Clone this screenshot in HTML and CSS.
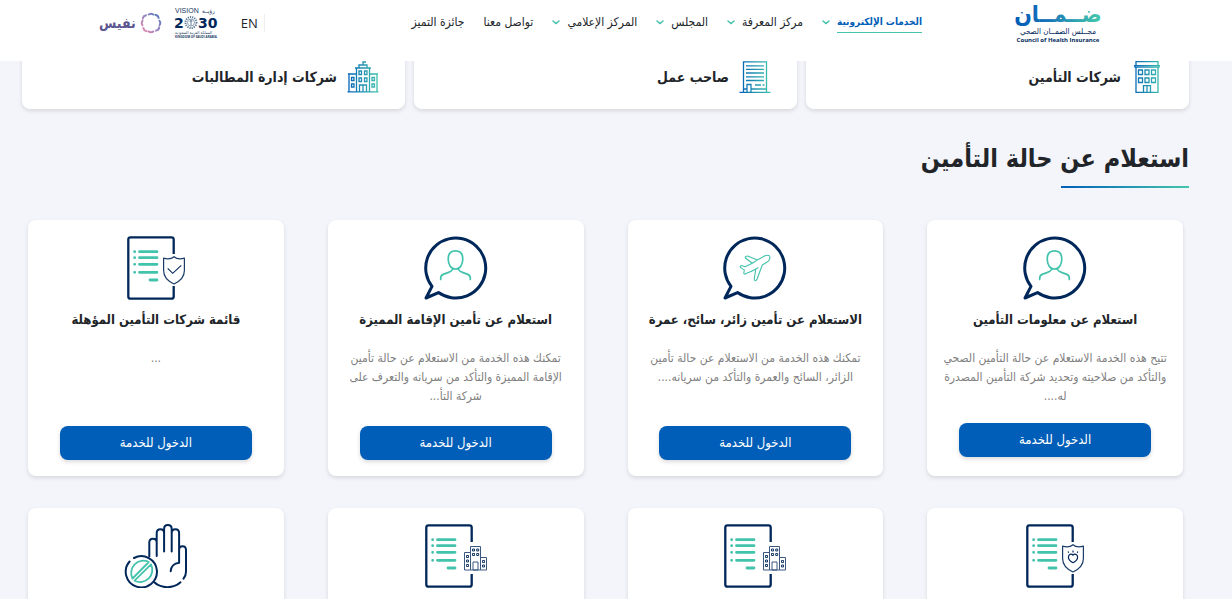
FILE: index.html
```html
<!DOCTYPE html>
<html lang="ar" dir="rtl">
<head>
<meta charset="utf-8">
<meta name="viewport" content="width=device-width, initial-scale=1">
<title>مجلس الضمان الصحي</title>
<link rel="stylesheet" href="styles.css">
</head>
<body>
<svg class="defs" width="0" height="0" aria-hidden="true">
  <defs>
    <linearGradient id="brand" gradientUnits="userSpaceOnUse" x1="0" y1="0" x2="32" y2="0">
      <stop offset="0" stop-color="#005eb8"/><stop offset="1" stop-color="#43c6ac"/>
    </linearGradient>
    <symbol id="chevron" viewBox="0 0 8 5"><path d="M1 1l3 2.6L7 1" fill="none" stroke="#43c2ac" stroke-width="1.5" stroke-linecap="round"/></symbol>
    <symbol id="bubble" viewBox="0 0 64 64">
      <path d="M8 50.4A30 30 0 1 1 14.5 56.6L2 62z" fill="none" stroke="#00275a" stroke-width="3" stroke-linejoin="round"/>
    </symbol>
    <symbol id="person" viewBox="0 0 64 64">
      <g fill="none" stroke="#43c2ac" stroke-width="1.7" stroke-linecap="round">
        <path d="M31.500 14.800c4.600 0 7.300 2.800 7.300 8.200 0 5.800-3 10-7.300 10s-7.300-4.200-7.300-10c0-5.400 2.700-8.200 7.300-8.200z"/>
        <path d="M16.700 43.500v-1.500c0-2 1.100-3.200 3-3.900l4.300-1.500c2-.7 4-1.900 5.200-3.700M46.300 43.500v-1.500c0-2-1.100-3.200-3-3.900l-4.300-1.500c-2-.7-4-1.900-5.200-3.700"/>
      </g>
    </symbol>
    <symbol id="plane" viewBox="0 0 64 64">
      <path d="M46.500 20c-1-1.200-3-.8-4.500-.2L34.300 24l-9-3.700c-1-.4-1.700-.3-2.400.2-.9.600-.9 1.100-.2 1.800l6.600 5-7.300 3.400-3-1c-1.200-.2-2 .8-1.700 1.700l4 2.500-.5 3.400c.4 1 1.200.9 2 .5l2.500-1.300c3-.9 5-2 7.500-3.500l-1.500 9.500c-.1 1.600.5 2.500 1.500 2.100.7-.3 1-.9 1.300-1.600l5.200-14 5.300-3.200c1.700-1.200 3-3.900 1.900-5.800zM34.300 24l-5 3.300M32.800 33l2.500-1.500" fill="none" stroke="#43c2ac" stroke-width="1.100" stroke-linejoin="round"/>
    </symbol>
    <symbol id="doc" viewBox="0 0 62 64">
      <path d="M46.700 18V3.500c0-1.400-.8-2.200-2.200-2.200H3.500c-1.400 0-2.200.8-2.200 2.200v57c0 1.400.8 2.200 2.200 2.200h41c1.400 0 2.200-.8 2.200-2.200V50" fill="none" stroke="#00275a" stroke-width="2.300"/>
      <path d="M12.500 15.700h17.500M12.500 21.700h17.500M12.500 28.300h17.500M12.500 36.300h17.500M23 44h7M7.600 15.700h.1M7.600 21.700h.1M7.600 28.300h.1M7.600 36.300h.1" stroke="#43c2ac" stroke-width="2.800" stroke-linecap="round"/>
    </symbol>
    <symbol id="shield" viewBox="0 0 62 64">
      <path d="M47 20.700c-2.500 2.200-6 2.600-10.400 1.500v12.300c0 5.800 4.400 10.700 10.400 13.500 6-2.800 10.400-7.700 10.400-13.500V22.200c-4.400 1.100-7.900.7-10.400-1.500z" fill="#fff" stroke="#1b3c69" stroke-width="1.200" stroke-linejoin="round"/>
    </symbol>
    <symbol id="blocks" viewBox="0 0 62 64">
      <g fill="#fff" stroke="#3b5880" stroke-width="1"><path d="M39.500 28.500h6v17.500h-6zM55.500 33.500h6v12.500h-6zM45.500 22.500h10v23.500h-10zM48 38h5v8h-5z"/></g>
      <path d="M47.500 25h2v2h-2zM51.700 25h2v2h-2zM47.500 29.500h2v2h-2zM51.700 29.500h2v2h-2zM41.500 31.500h2v2h-2zM41.500 36h2v2h-2zM41.500 40.500h2v2h-2zM57.500 36.500h2v2h-2zM57.500 41h2v2h-2z" fill="#fff" stroke="#00275a" stroke-width=".9"/>
    </symbol>
  </defs>
</svg>

<header class="header">
  <a class="brand" href="#" aria-label="مجلس الضمان الصحي">
    <svg class="brand-mark" viewBox="0 0 80 42" width="80" height="42">
      <defs><linearGradient id="word" gradientUnits="userSpaceOnUse" x1="0" y1="0" x2="80" y2="0"><stop offset="0" stop-color="#005eb8"/><stop offset=".35" stop-color="#1672b9"/><stop offset="1" stop-color="#43c6ac"/></linearGradient></defs>
      <text class="word" x="40" y="20" fill="url(#word)">ضــمــان</text>
      <text class="word-ar" x="40" y="32">مجــلس الضمــان الصحي</text>
      <text class="word-en" x="40" y="40" direction="ltr">Council of Health Insurance</text>
    </svg>
  </a>
  <nav class="nav" aria-label="القائمة الرئيسية">
    <a class="nav-link nav-link-active" href="#"><span>الخدمات الإلكترونية</span><svg class="chev"><use href="#chevron"/></svg></a>
    <a class="nav-link" href="#"><span>مركز المعرفة</span><svg class="chev"><use href="#chevron"/></svg></a>
    <a class="nav-link" href="#"><span>المجلس</span><svg class="chev"><use href="#chevron"/></svg></a>
    <a class="nav-link" href="#"><span>المركز الإعلامي</span><svg class="chev"><use href="#chevron"/></svg></a>
    <a class="nav-link" href="#"><span>تواصل معنا</span></a>
    <a class="nav-link" href="#"><span>جائزة التميز</span></a>
  </nav>
  <div class="tools">
    <a class="lang" href="#" lang="en">EN</a>
    <svg class="vision" viewBox="0 0 44 32" width="44" height="32" role="img" aria-label="Vision 2030">
      <g fill="#17375f" direction="ltr">
        <text x="0" y="6" font-size="7" font-family="Liberation Sans, sans-serif">VISION</text>
        <text x="27" y="6" font-size="6">رؤيــة</text>
        <g fill="#00275a" font-size="14" font-weight="700" font-family="DejaVu Sans, sans-serif">
          <text x="-1" y="21">2</text>
          <text x="23" y="21">30</text>
        </g>
        <text x="0" y="27" font-size="4">المملكة العربية السعودية</text>
        <text x="0" y="31" font-size="3" font-weight="700" font-family="Open Sans, sans-serif">KINGDOM OF SAUDI ARABIA</text>
      </g>
      <g fill="none" stroke="#5e7c98"><circle cx="16" cy="15.500" r="5.500" stroke-width="2" stroke-dasharray="1.200 1"/><circle cx="16" cy="15.500" r="3.500" stroke-width=".7"/><path d="M16 12.500v6M14.500 14h3" stroke-width="1"/></g>
    </svg>
    <a class="nafis" href="#">
      <svg viewBox="0 0 22 22" width="22" height="22" aria-hidden="true">
        <defs><linearGradient id="ring" x1="1" y1="0" x2="0" y2="1"><stop offset="0" stop-color="#4a78b8"/><stop offset=".5" stop-color="#9a86c2"/><stop offset="1" stop-color="#e887a8"/></linearGradient></defs>
        <path d="M8.100 3q2.900-2.600 5.800 0M14.600 2.700q3.900.2 4.100 4.100M19 8.100q2.600 2.900 0 5.800M19.300 14.600q-.2 3.900-4.100 4.100M13.900 19q-2.900 2.600-5.800 0M7.400 19.300q-3.900-.2-4.100-4.100M3 13.900q-2.600-2.900 0-5.800M2.700 7.400q.2-3.900 4.100-4.100" fill="none" stroke="url(#ring)" stroke-width="1.900"/>
      </svg>
      <span>نفيس</span>
    </a>
  </div>
</header>

<main class="page">
  <div class="sectors">
    <a class="sector" href="#">
      <svg viewBox="0 0 32 32" width="32" height="32" fill="none" stroke="url(#brand)" stroke-width="1.300" aria-hidden="true">
        <path d="M5 .6h22v4H5zM3 4.600h26M4 4.600v1.500h24V4.600M5 6v25.400h22V6M7.500 9h4v4.500h-4zM14 9h4v4.500h-4zM20.500 9h4v4.500h-4zM7.500 17h4v4.500h-4zM14 17h4v4.500h-4zM20.500 17h4v4.500h-4zM12.500 31v-6.400h7V31M16 25v6"/>
      </svg>
      <span>شركات التأمين</span>
    </a>
    <a class="sector" href="#">
      <svg viewBox="0 0 32 32" width="32" height="32" fill="none" stroke="url(#brand)" stroke-width="1.300" aria-hidden="true">
        <path d="M4.500 31V.8h23V31M.5 31.300h31M7 4.800h18M7 8.300h18M7 12h18M7 15.800h18M7 19.500h18M8 31v-7.500h4V31M16 24h6M23.500 24h2M4.500 28h3.500M12 28h15.500"/>
      </svg>
      <span>صاحب عمل</span>
    </a>
    <a class="sector" href="#">
      <svg viewBox="0 0 32 32" width="32" height="32" fill="none" stroke="url(#brand)" stroke-width="1.300" aria-hidden="true">
        <path d="M9.500 30.500V7h13v23.500M8 7h16M12 7V4h8v3M16 4V1h3M2 30.500V13h7.500M1 13h8.500M22.500 13H31M30 13v17.500M.5 30.800h31M4.500 16.500h2.500v3H4.500zM4.500 23h2.500v3H4.500zM25 16.500h2.500v3H25zM25 23h2.500v3H25zM12 10h2.500v3.500H12zM17.500 10H20v3.500h-2.500zM12 17h2.500v3.500H12zM17.500 17H20v3.500h-2.500zM12.500 30.500V24h7v6.500M16 24v6.500"/>
      </svg>
      <span>شركات إدارة المطالبات</span>
    </a>
  </div>

  <h1 class="heading">استعلام عن حالة التأمين</h1>

  <div class="services">
    <article class="card card-raised">
      <svg class="icon"><use href="#bubble"/><use href="#person"/></svg>
      <h2>استعلام عن معلومات التأمين</h2>
      <p>تتيح هذه الخدمة الاستعلام عن حالة التأمين الصحي<br>والتأكد من صلاحيته وتحديد شركة التأمين المصدرة<br>له....</p>
      <button type="button">الدخول للخدمة</button>
    </article>
    <article class="card">
      <svg class="icon"><use href="#bubble"/><use href="#plane"/></svg>
      <h2>الاستعلام عن تأمين زائر، سائح، عمرة</h2>
      <p>تمكنك هذه الخدمة من الاستعلام عن حالة تأمين<br>الزائر، السائح والعمرة والتأكد من سريانه....</p>
      <button type="button">الدخول للخدمة</button>
    </article>
    <article class="card">
      <svg class="icon"><use href="#bubble"/><use href="#person"/></svg>
      <h2>استعلام عن تأمين الإقامة المميزة</h2>
      <p>تمكنك هذه الخدمة من الاستعلام عن حالة تأمين<br>الإقامة المميزة والتأكد من سريانه والتعرف على<br>شركة التأ...</p>
      <button type="button">الدخول للخدمة</button>
    </article>
    <article class="card">
      <svg class="icon" viewBox="-2 0 62 64"><use href="#doc" width="62" height="64"/><use href="#shield" width="62" height="64"/><path d="M40.700 32.300l5 5 8.600-8" fill="none" stroke="#00275a" stroke-width="1.100"/></svg>
      <h2>قائمة شركات التأمين المؤهلة</h2>
      <p>...</p>
      <button type="button">الدخول للخدمة</button>
    </article>
    <article class="card">
      <svg class="icon" viewBox="-2 0 62 64"><use href="#doc" width="62" height="64"/><use href="#shield" width="62" height="64"/><path d="M47 38.700c-3-1.200-4.600-3.400-4.600-5.600 0-2.900 3-3.700 4.600-1.900 1.600-1.800 4.600-1 4.600 1.900 0 2.200-1.600 4.400-4.600 5.600zM47 26.500v2M42 27.500l.8 1.300M52 27.500l-.8 1.300" fill="none" stroke="#00275a" stroke-width="1.200"/></svg>
    </article>
    <article class="card">
      <svg class="icon" viewBox="0 0 62 64"><use href="#doc" width="62" height="64"/><use href="#blocks" width="62" height="64"/></svg>
    </article>
    <article class="card">
      <svg class="icon" viewBox="0 0 62 64"><use href="#doc" width="62" height="64"/><use href="#blocks" width="62" height="64"/></svg>
    </article>
    <article class="card">
      <svg class="icon" viewBox="0 0 62 64" fill="none" stroke-linecap="round" stroke-width="2">
        <g stroke="#00275a">
          <path d="M24.300 32.500V18.500c0-5 7.400-5 7.400 0V32M31.700 18V9c0-5 7.400-5 7.400 0M39.100 27.500V5c0-5.200 7.600-5.200 7.600 0v22.500M46.700 9c0-5 7.400-5 7.400 0v29.700c-5 .4-8.200 3.800-8.400 8.600M54.100 26c0-5 6.900-5 6.900 0v21.700c0 2.500-1 5-2.500 7M55.500 58.300c-7.500 6.600-19 6.400-26.200 0"/>
          <path d="M9 34A15.600 15.600 0 1 1 4.600 37.500"/>
        </g>
        <path d="M23.800 38A12.200 12.200 0 0 0 7.500 54.500zM26 40.300A12.200 12.200 0 0 1 9.600 56.700z" stroke="#43c2ac" stroke-width="1.800" stroke-linejoin="round"/>
      </svg>
    </article>
  </div>
</main>
</body>
</html>
```
FILE: styles.css
```css
* { box-sizing: border-box; }

body {
  margin: 0;
  height: 100vh;
  overflow: hidden;
  background: #f4f5fa;
  color: #212529;
  font-family: "DejaVu Sans Condensed", "DejaVu Sans", sans-serif;
}

a { color: inherit; text-decoration: none; }
.defs { display: block; }

.header {
  position: relative;
  z-index: 2;
  display: flex;
  align-items: flex-start;
  height: 61px;
  padding: 0 134px 0 99px;
  background: #fff;
}

.brand { padding-top: 2px; }
.brand-mark { display: block; overflow: visible; }
.brand-mark text { text-anchor: middle; }
.word { font-size: 23px; font-weight: 700; }
.word-ar { font-size: 8px; fill: #00275a; }
.word-en { font-family: "Open Sans", sans-serif; font-size: 6px; font-weight: 700; fill: #00275a; }

.nav {
  display: flex;
  gap: 19px;
  margin-inline-start: 96px;
  padding-top: 12px;
}
.nav-link {
  display: flex;
  gap: 7px;
  font-size: 12px;
  line-height: 20px;
  white-space: nowrap;
}
.nav-link-active { font-size: 10px; }
.nav-link-active span {
  color: #005eb8;
  font-weight: 700;
  border-bottom: 1px solid #43c2ac;
}
.chev { width: 8px; height: 5px; margin-top: 8px; }

.tools {
  display: flex;
  align-items: center;
  margin-inline-start: auto;
  padding-top: 7px;
}
.lang {
  padding-inline-start: 6px;
  border-inline-start: 1px solid #eee;
  font-family: "Open Sans", sans-serif;
  font-size: 13px;
  line-height: 18px;
}
.vision { margin-inline-start: 22px; overflow: visible; }
.nafis {
  display: flex;
  align-items: center;
  gap: 4px;
  margin-inline-start: 13px;
  color: #5b5590;
  font-size: 14px;
  font-weight: 700;
  line-height: 22px;
}

.page { padding: 0 43px 0 22px; }

.sectors {
  display: grid;
  grid-template-columns: repeat(3, 1fr);
  gap: 9px;
  margin-top: -16px;
}
.sector {
  display: flex;
  align-items: center;
  gap: 10px;
  height: 64px;
  padding: 0 26px;
  border-radius: 8px;
  background: #fff;
  box-shadow: 0 2px 4px rgba(0, 0, 0, .12);
  font-size: 14px;
  font-weight: 700;
}

.heading {
  margin: 28px 0 32px;
  font-size: 25px;
  line-height: 44px;
}
.heading::after {
  content: "";
  display: block;
  width: 128px;
  height: 2px;
  margin-top: 5px;
  background: linear-gradient(90deg, #005eb8, #43c6ac);
}

.services {
  display: grid;
  grid-template-columns: repeat(4, 1fr);
  grid-auto-rows: minmax(256px, auto);
  gap: 32px 44px;
  padding: 0 6px;
}
.card {
  display: flex;
  flex-direction: column;
  align-items: center;
  padding: 16px;
  border-radius: 8px;
  background: #fff;
  box-shadow: 0 2px 4px rgba(0, 0, 0, .12);
  text-align: center;
}
.card-raised { padding-bottom: 19px; }
.icon { width: 64px; height: 64px; }
.card h2 {
  margin: 8px 0 17px;
  font-size: 13px;
  line-height: 24px;
  white-space: nowrap;
}
.card p {
  margin: 0;
  color: #808080;
  font-size: 12px;
  line-height: 19px;
  white-space: nowrap;
}
.card button {
  width: 192px;
  height: 34px;
  margin-top: auto;
  padding: 0 0 2px;
  border: 0;
  border-radius: 8px;
  background: #005eb8;
  box-shadow: 0 2px 4px rgba(0, 0, 0, .15);
  color: #fff;
  font-family: inherit;
  font-size: 13px;
}
```
